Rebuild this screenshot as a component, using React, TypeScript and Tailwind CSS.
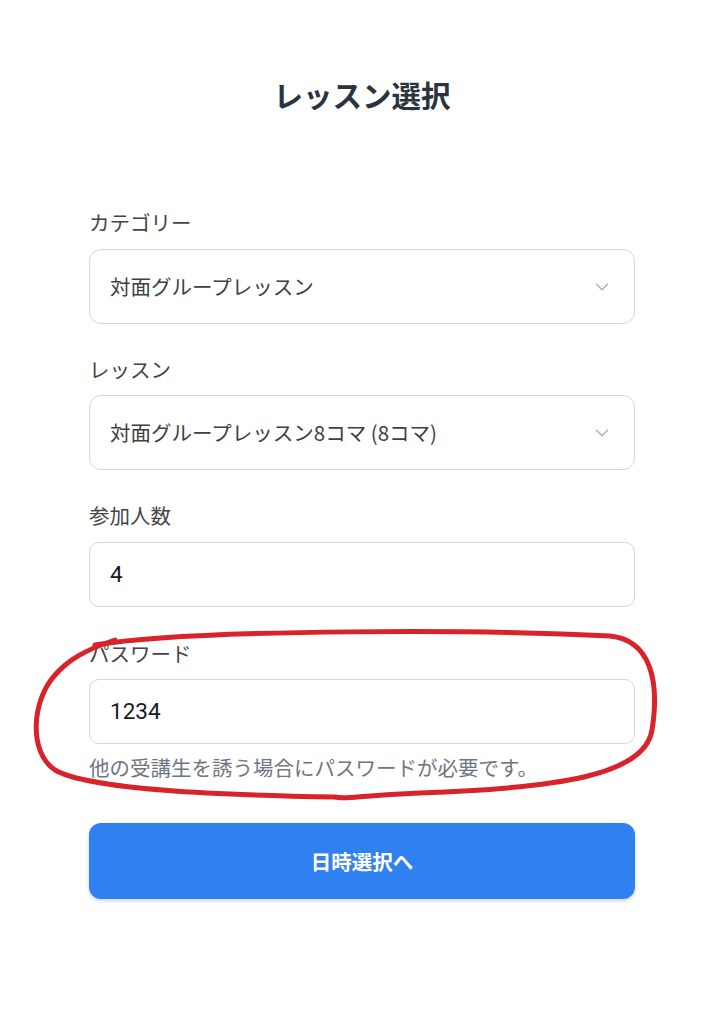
import React from "react";

const font = { fontFamily: '"Noto Sans CJK JP", "Noto Sans", sans-serif' };

function Chevron() {
  return (
    <svg width="22" height="22" viewBox="0 0 24 24" fill="none" stroke="#b5b5b5" strokeWidth="1.8" strokeLinecap="round" strokeLinejoin="round">
      <path d="M6 9l6 6 6-6" />
    </svg>
  );
}

function SelectBox({ value }: { value: string }) {
  return (
    <div className="flex h-[75px] items-center justify-between rounded-[12px] border border-[#d6d6d6] bg-white pl-[20px] pr-[21px]">
      <span className="text-[20.5px] text-[#404040]">{value}</span>
      <Chevron />
    </div>
  );
}

function InputBox({ value }: { value: string }) {
  return (
    <div className="flex h-[65px] items-center rounded-[10px] border border-[#d6d6d6] bg-white pl-[20px]">
      <span className="text-[22.5px] text-[#1a1a1a]" style={{ fontFamily: 'Roboto, "Noto Sans", sans-serif' }}>{value}</span>
    </div>
  );
}

function Label({ children }: { children: React.ReactNode }) {
  return <div className="h-[28px] text-[20.5px] leading-[28px] text-[#444444]">{children}</div>;
}

export default function App() {
  return (
    <div className="relative min-h-[1024px] w-[724px] bg-white" style={font}>
      <div className="flex flex-col px-[89px] pt-[74px]">
        <h1 className="text-center text-[29.5px] font-bold leading-[40px] text-[#2a3340]">レッスン選択</h1>
        <div className="mt-[94px] flex flex-col">
          <Label>カテゴリー</Label>
          <div className="mt-[13px]"><SelectBox value="対面グループレッスン" /></div>
          <div className="mt-[31px]"><Label>レッスン</Label></div>
          <div className="mt-[12px]"><SelectBox value="対面グループレッスン8コマ (8コマ)" /></div>
          <div className="mt-[31px]"><Label>参加人数</Label></div>
          <div className="mt-[13px]"><InputBox value="4" /></div>
          <div className="mt-[32px]"><Label>パスワード</Label></div>
          <div className="mt-[12px]"><InputBox value="1234" /></div>
          <div className="mt-[9px] h-[28px] text-[20.5px] leading-[28px] text-[#6e7682]">他の受講生を誘う場合にパスワードが必要です。</div>
          <button className="mt-[42px] flex h-[76px] items-center justify-center rounded-[12px] bg-[#2f80f0] text-[20.5px] font-bold text-white shadow-[0_2px_4px_rgba(0,0,0,0.18)]">
            日時選択へ
          </button>
        </div>
      </div>
      <svg className="pointer-events-none absolute left-0 top-0" width="724" height="1024" viewBox="0 0 724 1024" fill="none">
        <path
          d="M 95 645 C 200 628, 500 630, 610 636 C 650 640, 660 680, 652 730 C 645 775, 560 788, 420 793 C 360 795, 345 800, 335 797 C 220 795, 90 790, 55 770 C 28 752, 32 700, 55 675 C 68 660, 85 650, 115 640"
          stroke="#d8232a"
          strokeWidth="5"
          strokeLinecap="round"
          strokeLinejoin="round"
        />
      </svg>
    </div>
  );
}
